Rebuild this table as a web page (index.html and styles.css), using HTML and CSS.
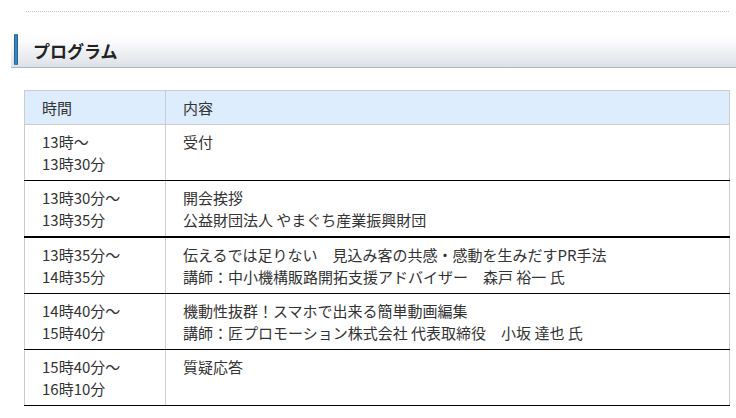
FILE: index.html
```html
<!DOCTYPE html>
<html lang="ja">
<head>
    <meta charset="UTF-8">
    <meta name="viewport" content="width=device-width, initial-scale=1.0">
    <title>プログラム</title>
    <link rel="stylesheet" href="styles.css">
</head>
<body>
    <div class="rule"></div>
    <h2 class="heading"><span class="bar"></span>プログラム</h2>
    <table class="program">
        <thead>
            <tr>
                <th class="time">時間</th>
                <th>内容</th>
            </tr>
        </thead>
        <tbody>
            <tr>
                <td class="time">13時～<br>13時30分</td>
                <td>受付</td>
            </tr>
            <tr>
                <td class="time">13時30分～<br>13時35分</td>
                <td>開会挨拶<br>公益財団法人 やまぐち産業振興財団</td>
            </tr>
            <tr class="strong">
                <td class="time">13時35分～<br>14時35分</td>
                <td>伝えるでは足りない　見込み客の共感・感動を生みだすPR手法<br>講師：中小機構販路開拓支援アドバイザー　森戸 裕一 氏</td>
            </tr>
            <tr>
                <td class="time">14時40分～<br>15時40分</td>
                <td>機動性抜群！スマホで出来る簡単動画編集<br>講師：匠プロモーション株式会社 代表取締役　小坂 達也 氏</td>
            </tr>
            <tr>
                <td class="time">15時40分～<br>16時10分</td>
                <td>質疑応答</td>
            </tr>
        </tbody>
    </table>
</body>
</html>
```

FILE: styles.css
```css
body {
    margin: 0;
    font-family: "Noto Sans CJK JP", "Noto Sans", sans-serif;
    color: #333;
    background-color: #fff;
}
.rule {
    margin: 11px 7px 0 26px;
    border-top: 1px dotted #c4c4c4;
}
.heading {
    display: flex;
    align-items: center;
    gap: 15px;
    margin: 22px 0 0 11px;
    height: 33px;
    padding-left: 3px;
    font-size: 17px;
    font-weight: bold;
    color: #222;
    background: linear-gradient(to bottom, #ffffff 0%, #fbfbfd 25%, #eef0f3 55%, #dde1e6 100%);
    border-bottom: 1px solid #a9bac6;
}
.bar {
    align-self: flex-start;
    width: 4px;
    height: 31px;
    border-radius: 1px;
    background: linear-gradient(to right, #1a5685, #4195d2, #1a5685);
}
.program {
    margin: 22px 0 0 24px;
    width: 706px;
    border-collapse: collapse;
    font-size: 15px;
    line-height: 22px;
    border-left: 1px solid #cccccc;
    border-right: 1px solid #cccccc;
}
.program th,
.program td {
    padding: 6px 17px 5px;
    text-align: left;
    vertical-align: top;
    font-weight: normal;
}
.program th {
    background-color: #ddedfd;
    border: 1px solid #cccccc;
}
.program td {
    border-top: 1px solid #000;
    border-bottom: 1px solid #000;
}
.program .time {
    width: 106px;
    border-right: 1px solid #cccccc;
}
.program tr.strong td {
    border-top: 2px solid #000;
}
```
